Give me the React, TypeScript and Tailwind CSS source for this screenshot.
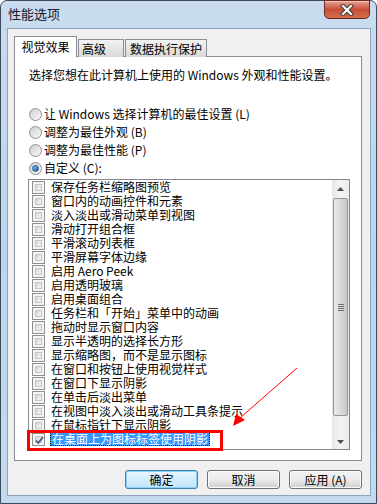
import React from 'react';

const items = [
  '保存任务栏缩略图预览',
  '窗口内的动画控件和元素',
  '淡入淡出或滑动菜单到视图',
  '滑动打开组合框',
  '平滑滚动列表框',
  '平滑屏幕字体边缘',
  '启用 Aero Peek',
  '启用透明玻璃',
  '启用桌面组合',
  '任务栏和「开始」菜单中的动画',
  '拖动时显示窗口内容',
  '显示半透明的选择长方形',
  '显示缩略图，而不是显示图标',
  '在窗口和按钮上使用视觉样式',
  '在窗口下显示阴影',
  '在单击后淡出菜单',
  '在视图中淡入淡出或滑动工具条提示',
  '在鼠标指针下显示阴影',
];

const radios = [
  { label: '让 Windows 选择计算机的最佳设置', key: 'L', on: false },
  { label: '调整为最佳外观', key: 'B', on: false },
  { label: '调整为最佳性能', key: 'P', on: false },
  { label: '自定义', key: 'C', on: true, colon: true },
];

function Checkbox({ checked }: { checked?: boolean }) {
  return (
    <span className="relative w-[13px] h-[13px] shrink-0 border border-[#8f8f8f] bg-[#f4f4f4] p-[2px] flex">
      <span className="flex-1 border border-[#c6c6c6] bg-gradient-to-br from-[#d6d6d6] to-[#f7f7f7]" />
      {checked && (
        <svg className="absolute left-[1px] top-[1px]" width="11" height="11" viewBox="0 0 11 11">
          <path d="M2 5.5 L4.3 8 L9 2" stroke="#3b4f8a" strokeWidth="1.6" fill="none" />
        </svg>
      )}
    </span>
  );
}

function Radio({ on }: { on: boolean }) {
  return (
    <span className="w-[13px] h-[13px] shrink-0 rounded-full border border-[#8f8f8f] bg-gradient-to-br from-[#cfcfcf] to-[#fbfbfb] flex items-center justify-center">
      {on && (
        <span className="w-[7px] h-[7px] rounded-full bg-gradient-to-br from-[#7fc3f5] to-[#1a5fa8] border border-[#255a97]" />
      )}
    </span>
  );
}

function Button({ label, primary }: { label: string; primary?: boolean }) {
  return (
    <div
      className={`w-[73px] h-[19px] rounded-[3px] border flex items-center justify-center text-[12px] leading-none ${
        primary
          ? 'border-[#3c7fb1] bg-gradient-to-b from-[#eaf6fd] to-[#bee6fd] shadow-[inset_0_0_0_1px_#8fd0f8]'
          : 'border-[#707070] bg-gradient-to-b from-[#f2f2f2] via-[#ebebeb] to-[#cfcfcf] shadow-[inset_0_0_0_1px_#fcfcfc]'
      }`}
    >
      {label}
    </div>
  );
}

export default function App() {
  return (
    <div className="relative w-[377px] h-[504px] font-['Noto_Sans_CJK_SC',sans-serif] text-black text-[12px] overflow-hidden">
      <div className="w-full h-full rounded-t-[7px] border border-[#3c4a5c] bg-gradient-to-b from-[#c9dcef] via-[#bcd4ee] to-[#c3d9f0] flex flex-col pl-[6px] pr-[5px] pb-[7px]">
        {/* title bar */}
        <div className="h-[27px] flex items-start shrink-0">
          <span className="mt-[5px] ml-[1px] text-[13px] leading-[16px] text-[#1a1a2e]">性能选项</span>
          <div className="ml-auto mr-[1px] w-[46px] h-[19px] -mt-px rounded-b-[5px] border border-[#6b2a20] bg-gradient-to-b from-[#e8a393] via-[#c84e3a] to-[#d36c4e] flex items-center justify-center shadow-[inset_0_1px_0_#f6c3b6]">
            <svg width="14" height="12" viewBox="0 0 14 12">
              <path d="M3 2 L11 10 M11 2 L3 10" stroke="#3a3a3a" strokeWidth="4.2" strokeLinecap="square" />
              <path d="M3 2 L11 10 M11 2 L3 10" stroke="#ffffff" strokeWidth="2.2" strokeLinecap="square" />
            </svg>
          </div>
        </div>

        {/* client area */}
        <div className="flex-1 border border-[#8ea3bd] bg-[#f0f0f0] flex flex-col pt-[7px] pl-[6px] pr-[8px] pb-[6px]">
          {/* tabs */}
          <div className="flex items-end h-[21px] relative z-10 shrink-0">
            <div className="w-[63px] h-[21px] bg-white border border-[#898c95] border-b-0 flex items-center justify-center text-[12px] pb-[1px]">
              视觉效果
            </div>
            <div className="w-[46px] h-[18px] ml-px border border-[#898c95] border-b-0 bg-gradient-to-b from-[#f3f3f3] to-[#d9d9d9] flex items-center pl-[3px] text-[12px]">
              高级
            </div>
            <div className="w-[82px] h-[18px] ml-px border border-[#898c95] border-b-0 bg-gradient-to-b from-[#f3f3f3] to-[#d9d9d9] flex items-center justify-center text-[12px]">
              数据执行保护
            </div>
          </div>

          {/* panel */}
          <div className="-mt-px h-[405px] border border-[#898c95] bg-white flex flex-col pl-[13px] pr-[11px] shrink-0">
            <p className="mt-[10px] ml-[1px] leading-[16px] whitespace-nowrap">
              选择您想在此计算机上使用的 Windows 外观和性能设置。
            </p>
            <div className="mt-[22px] flex flex-col ml-[1px]">
              {radios.map((r) => (
                <div key={r.key} className="h-[18px] flex items-center gap-[2px] whitespace-nowrap">
                  <Radio on={r.on} />
                  <span className="leading-[16px]">
                    {r.label} ({r.key}){r.colon ? ':' : ''}
                  </span>
                </div>
              ))}
            </div>

            {/* list */}
            <div className="mt-[2px] h-[271px] border border-[#828790] flex">
              <div className="flex-1 flex flex-col pl-[3px]">
                {items.map((t) => (
                  <div key={t} className="h-[14px] flex items-center gap-[6px] whitespace-nowrap">
                    <Checkbox />
                    <span className="leading-[14px]">{t}</span>
                  </div>
                ))}
                <div className="h-[14px] flex items-center gap-[5px] whitespace-nowrap">
                  <Checkbox checked />
                  <span className="leading-[12px] bg-[#3399ff] text-white px-px border border-dotted border-[#222]">
                    在桌面上为图标标签使用阴影
                  </span>
                </div>
              </div>
              {/* scrollbar */}
              <div className="w-[17px] bg-gradient-to-r from-[#e6e6e6] via-[#f4f4f4] to-[#eaeaea] flex flex-col items-center shrink-0">
                <div className="h-[18px] w-full flex items-center justify-center">
                  <svg width="7" height="4" viewBox="0 0 7 4">
                    <path d="M0 4 L3.5 0 L7 4 Z" fill="#4d4d4d" />
                  </svg>
                </div>
                <div className="h-[218px] w-[15px] rounded-[2px] border border-[#959595] bg-gradient-to-r from-[#e9e9e9] via-[#dadada] to-[#c8c8c8] flex flex-col items-center justify-center gap-[1px]">
                  <span className="w-[6px] h-px bg-[#6e6e6e]" />
                  <span className="w-[6px] h-px bg-[#6e6e6e]" />
                  <span className="w-[6px] h-px bg-[#6e6e6e]" />
                  <span className="w-[6px] h-px bg-[#6e6e6e]" />
                </div>
                <div className="flex-1 w-full flex items-end justify-center pb-[5px]">
                  <svg width="7" height="4" viewBox="0 0 7 4">
                    <path d="M0 0 L3.5 4 L7 0 Z" fill="#4d4d4d" />
                  </svg>
                </div>
              </div>
            </div>
          </div>

          {/* buttons */}
          <div className="mt-[9px] flex justify-end gap-[9px]">
            <Button label="确定" primary />
            <Button label="取消" />
            <Button label="应用 (A)" />
          </div>
        </div>
      </div>

      {/* annotation: red box and arrow */}
      <div className="absolute left-[27px] top-[430px] w-[196px] h-[21px] border-[3px] border-[#ff0000]" />
      <svg className="absolute left-0 top-0" width="377" height="504" viewBox="0 0 377 504">
        <line x1="297" y1="368" x2="240" y2="418" stroke="#ff0000" strokeWidth="1" />
        <polygon points="233,426 236,414 245,420" fill="#ff0000" />
      </svg>
    </div>
  );
}
